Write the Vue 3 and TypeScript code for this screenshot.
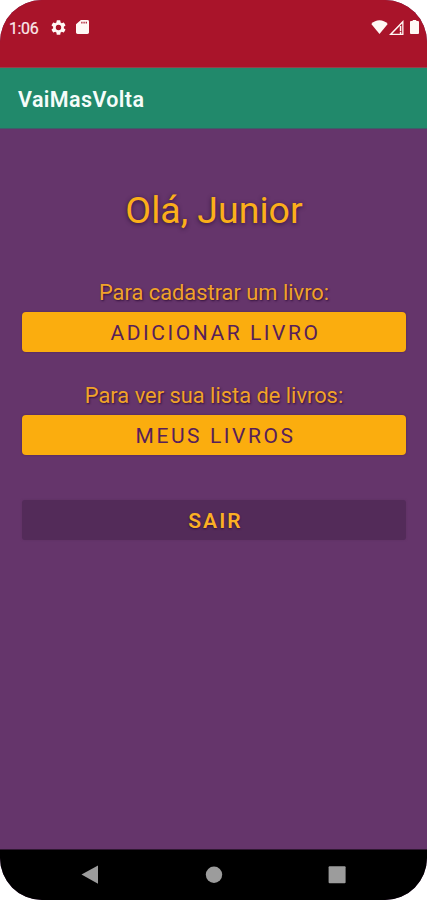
<script setup lang="ts">
interface Action {
  id: string
  hint: string
  label: string
}

const userName = 'Junior'
const actions: Action[] = [
  { id: 'add', hint: 'Para cadastrar um livro:', label: 'Adicionar livro' },
  { id: 'list', hint: 'Para ver sua lista de livros:', label: 'Meus livros' },
]
</script>

<template>
  <div class="phone">
    <div class="status">
      <span class="clock">1:06</span>
      <svg class="gear" viewBox="2 2 20 20">
        <path d="M19.14 12.94c.04-.3.06-.61.06-.94s-.02-.64-.07-.94l2.03-1.58a.49.49 0 0 0 .12-.61l-1.92-3.32a.49.49 0 0 0-.59-.22l-2.39.96a7 7 0 0 0-1.62-.94l-.36-2.54a.48.48 0 0 0-.48-.41h-3.84a.48.48 0 0 0-.47.41l-.36 2.54c-.59.24-1.13.57-1.62.94l-2.39-.96a.48.48 0 0 0-.59.22L2.74 8.87a.48.48 0 0 0 .12.61l2.03 1.58c-.05.3-.09.63-.09.94s.02.64.07.94l-2.03 1.58a.49.49 0 0 0-.12.61l1.92 3.32c.12.22.37.29.59.22l2.39-.96c.5.38 1.03.7 1.62.94l.36 2.54c.05.24.24.41.48.41h3.84c.24 0 .44-.17.47-.41l.36-2.54a7 7 0 0 0 1.62-.94l2.39.96c.22.08.47 0 .59-.22l1.92-3.32a.48.48 0 0 0-.12-.61zM12 15.6a3.6 3.6 0 1 1 0-7.2 3.6 3.6 0 0 1 0 7.2z" />
      </svg>
      <svg class="card" viewBox="4 2 16 20" preserveAspectRatio="none">
        <path d="M18 2h-8L4 8v12a2 2 0 0 0 2 2h12a2 2 0 0 0 2-2V4a2 2 0 0 0-2-2zm-6 5h-1.500V4.500H12zm2.700 0h-1.500V4.500h1.500zm2.700 0h-1.500V4.500h1.500z" />
      </svg>
      <span class="fill"></span>
      <svg class="wifi" viewBox="0 0 17 14">
        <path d="M8.500 14 L0.300 4 C4.800 -1 12.200 -1 16.700 4 Z" />
      </svg>
      <svg class="signal" viewBox="0 0 15 15">
        <path fill-rule="evenodd" d="M14.500 0V15H0Z M13.200 3.400V13.700H3.300Z" />
        <path d="M10.800 6h1.500v5.200h-1.500z M10.800 12h1.500v2h-1.500z" />
      </svg>
      <svg class="battery" viewBox="0 0 10 15" preserveAspectRatio="none">
        <path d="M3 0h4v1.200h2a1 1 0 0 1 1 1V14a1 1 0 0 1-1 1H1a1 1 0 0 1-1-1V2.200a1 1 0 0 1 1-1h2z" />
      </svg>
    </div>
    <header class="bar">VaiMasVolta</header>
    <main class="content">
      <h1 class="greeting">Olá, {{ userName }}</h1>
      <section v-for="a in actions" :key="a.id" class="group">
        <p class="hint">{{ a.hint }}</p>
        <button class="action">{{ a.label }}</button>
      </section>
      <button class="exit">Sair</button>
    </main>
    <nav class="nav">
      <svg viewBox="0 0 18 20"><path d="M0.500 9.500 L17 0.500 V18.800 Z" /></svg>
      <svg viewBox="0 0 18 20"><circle cx="9" cy="9.700" r="8.200" /></svg>
      <svg viewBox="0 0 18 20"><rect x="0.600" y="1.200" width="17" height="17" rx="1" /></svg>
    </nav>
  </div>
</template>

<style>
body {
  background: #fff;
}
</style>

<style scoped>
.phone {
  width: 427px;
  height: 900px;
  display: flex;
  flex-direction: column;
  overflow: hidden;
  border-radius: 42px;
  background: #65356b;
  font-family: Roboto, "Liberation Sans", sans-serif;
}
.status {
  height: 68px;
  box-sizing: border-box;
  padding: 17px 8px 0 9px;
  display: flex;
  align-items: flex-start;
  background: #a9142a;
  border-bottom: 1px solid #96414a;
  color: #fbe9ea;
}
.status svg {
  fill: #fff8f5;
  flex: none;
}
.clock {
  width: 42px;
  font-size: 16px;
  line-height: 23px;
  letter-spacing: -0.4px;
  -webkit-text-stroke: 0.2px #fbe9ea;
}
.gear {
  width: 15px;
  height: 15px;
  margin-top: 2.500px;
}
.card {
  width: 13px;
  height: 14px;
  margin: 3px 0 0 10px;
}
.fill {
  flex: 1;
}
.wifi {
  width: 17px;
  height: 14px;
  margin-top: 3px;
}
.signal {
  width: 15px;
  height: 15px;
  margin: 2.500px 0 0 1px;
}
.battery {
  width: 9px;
  height: 14px;
  margin: 3px 0 0 6px;
}
.bar {
  height: 61px;
  box-sizing: border-box;
  padding: 3px 18px 0;
  display: flex;
  align-items: center;
  background: #21896b;
  color: #f5fcfa;
  font-size: 21.5px;
  font-weight: 600;
  letter-spacing: 0.4px;
  border-bottom: 1px solid #3c6069;
}
.content {
  flex: 1;
  display: flex;
  flex-direction: column;
  padding: 56px 21px 0 22px;
}
.greeting {
  margin: 0 0 44px;
  height: 50px;
  line-height: 50px;
  text-align: center;
  font-size: 37.5px;
  font-weight: 400;
  color: #fbaf1a;
  text-shadow: 0 1px 4px #32143c;
}
.group {
  height: 103px;
}
.hint {
  margin: 0;
  height: 33px;
  line-height: 27px;
  font-size: 21.850px;
  text-align: center;
  color: #f0a329;
  text-shadow: 1px 1px 2px #32103c;
}
.action,
.exit {
  display: block;
  width: 100%;
  height: 40px;
  padding: 1px 0 0 3px;
  border: 0;
  border-radius: 4px;
  font-family: inherit;
  font-size: 21px;
  line-height: 41px;
  letter-spacing: 2.550px;
  text-transform: uppercase;
}
.action {
  background: #fbad0e;
  color: #57205a;
  box-shadow: 0 0 2px #4b2255;
}
.exit {
  margin-top: 15px;
  border-radius: 3px;
  background: #532b59;
  color: #fbaf24;
  font-weight: 600;
  letter-spacing: 2.100px;
  text-shadow: 0 1px 2px #300f3c;
  box-shadow: 0 0 2px #5b3061;
}
.nav {
  height: 51px;
  display: flex;
  align-items: center;
  justify-content: space-between;
  box-sizing: border-box;
  padding: 0 81px;
  border-top: 1px solid #2f1832;
  background: #000;
}
.nav svg {
  width: 18px;
  height: 20px;
  fill: #9c9c9c;
}
</style>
